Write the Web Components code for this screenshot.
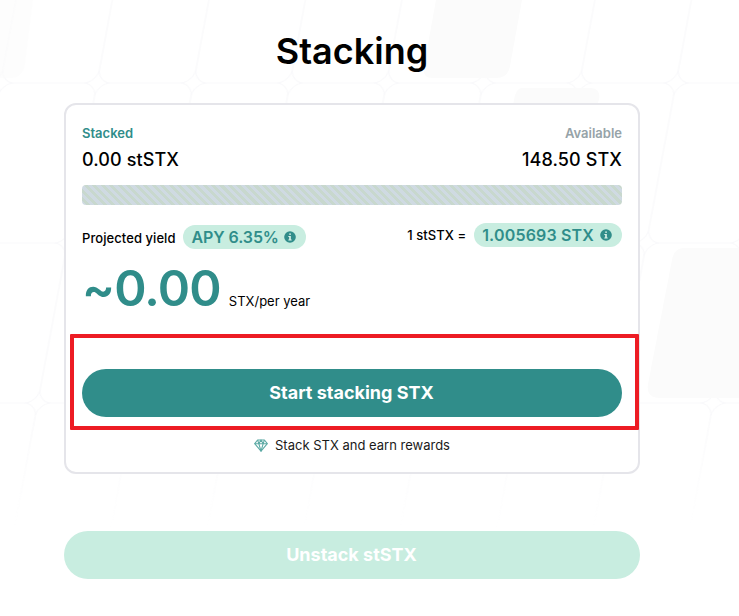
<!DOCTYPE html>
<html lang="en">
<head>
<meta charset="utf-8">
<title>Stacking</title>
<style>
html,body{margin:0;padding:0;background:#fff}
body{font-family:Inter,"Noto Sans",sans-serif;color:#000}
</style>
</head>
<body>
<template id="bg-t">
<style>
:host{position:absolute;inset:0;display:block;overflow:hidden;z-index:0;pointer-events:none}
svg{display:block;width:739px;height:616px}
</style>
<svg viewBox="0 0 739 616" aria-hidden="true">
<defs>
<pattern id="g" width="96.5" height="160" patternUnits="userSpaceOnUse" patternTransform="translate(0.5 83) skewX(-10.5)">
<rect x="0" y="0" width="96.5" height="160" rx="14" fill="none" stroke="#f9f9fb" stroke-width="1.2"/>
</pattern>
<linearGradient id="f" x1="0" y1="0" x2="0" y2="1">
<stop offset="0" stop-color="#fff"/><stop offset=".66" stop-color="#fff"/><stop offset=".86" stop-color="#fff" stop-opacity="0"/>
</linearGradient>
<mask id="m"><rect width="739" height="616" fill="url(#f)"/></mask>
</defs>
<g mask="url(#m)">
<rect width="739" height="616" fill="url(#g)"/>
<path d="M0 0H33L25 64Q23 78 10 78H0Z" fill="#fbfbfb" opacity=".6"/>
<path d="M436 0H522L510 66Q508 78 496 78H432Q422 78 424 66Z" fill="#fbfbfb"/>
<path d="M522 88H590Q601 88 599 100L594 112H512L514 100Q516 88 522 88Z" fill="#fbfbfb"/>
<path d="M684 248H739V398H660Q646 398 648 384L672 260Q674 248 684 248Z" fill="#fbfbfb"/>
</g>
</svg>
</template>

<template id="info-t">
<style>:host{display:inline-flex;flex:none;width:12px;height:12px}svg{display:block;width:100%;height:100%}</style>
<svg viewBox="0 0 13 13" aria-hidden="true"><circle cx="6.5" cy="6.5" r="6.3" fill="#308d8a"/><rect x="5.6" y="2.5" width="1.9" height="1.9" rx=".9" fill="#d9f1e9"/><path d="M4.7 5.4H7.4V9.2H8.3V10.4H4.7V9.2H5.6V6.6H4.7Z" fill="#d9f1e9"/></svg>
</template>

<template id="pill-t">
<style>
:host{display:inline-flex;align-items:center;height:24px;border-radius:12px;background:#c8ede0;color:#308d8a;font-size:16px;font-weight:600;line-height:24px;padding:0 10px 0 var(--pl,9px);gap:var(--gap,6px);white-space:nowrap;letter-spacing:var(--ls,0)}
</style>
<slot></slot><info-icon></info-icon>
</template>

<template id="stat-t">
<style>
:host{display:flex;flex-direction:column;gap:6px}
:host([end]){align-items:flex-end}
.l{font-size:13px;font-weight:600;line-height:18px;color:var(--c,#308d8a)}
.v{font-size:18px;font-weight:500;letter-spacing:.1px;line-height:24px;color:#000}
</style>
<div class="l"><slot name="label"></slot></div><div class="v"><slot></slot></div>
</template>

<template id="bar-t">
<style>
:host{display:block;height:20px;border-radius:4px;background:repeating-linear-gradient(45deg,#cfdae2 0 3px,#c8d8ce 3px 6px)}
</style>
</template>

<template id="btn-t">
<style>
:host{display:block}
button{display:block;width:100%;height:48px;border:0;border-radius:24px;padding:0 1px 0 0;font:700 18px/48px Inter,"Noto Sans",sans-serif;background:#308d8a;color:#fff;cursor:pointer}
:host([disabled]) button{background:#c8ede0;color:#fff;opacity:1;cursor:default}
</style>
<button><slot></slot></button>
</template>

<template id="mark-t">
<style>
:host{display:block;position:relative}
.box{position:absolute;left:-12px;right:-17px;top:-35px;bottom:-13px;border:4px solid #ed1c24;border-radius:1px;box-sizing:border-box;pointer-events:none}
</style>
<slot></slot><div class="box"></div>
</template>

<template id="card-t">
<style>
:host{display:block;box-sizing:border-box;height:371px;border:2px solid #e5e5ea;border-radius:12px;background:#fff;padding:19px 16px 0}
.row{display:flex;justify-content:space-between}
.bar{margin-top:13px}
.yield{display:flex;justify-content:space-between;align-items:flex-start;margin-top:18px;font-size:13px;font-weight:500;letter-spacing:.07px}
.g{display:flex;align-items:center;gap:8px;height:24px}
.g.a{margin-top:2px;gap:7px}
.g.a>span{padding-top:1px}
.big{display:flex;align-items:baseline;gap:8px;margin-top:11px;height:58px}
.num{font-size:49px;font-weight:600;letter-spacing:-.8px;line-height:58px;color:#308d8a}
.unit{font-size:13px;font-weight:400;line-height:18px}
.cta{margin-top:51px}
.note{display:flex;justify-content:center;align-items:center;gap:7px;margin-top:19px;font-size:13px;line-height:18px;color:#1a1a1a}
.note svg{width:14px;height:13px;display:block}
.apy{--ls:-.1px;--gap:5px}
.rate{--ls:.17px;--pl:8px}
</style>
<div class="row">
<stat-block><span slot="label">Stacked</span>0.00 stSTX</stat-block>
<stat-block end style="--c:#96a3a8"><span slot="label">Available</span>148.50 STX</stat-block>
</div>
<hatch-bar class="bar"></hatch-bar>
<div class="yield">
<div class="g a"><span>Projected yield</span><pill-badge class="apy">APY 6.35%</pill-badge></div>
<div class="g"><span>1 stSTX =</span><pill-badge class="rate">1.005693 STX</pill-badge></div>
</div>
<div class="big"><span class="num">~0.00</span><span class="unit">STX/per year</span></div>
<marked-area class="cta"><action-button>Start stacking STX</action-button></marked-area>
<div class="note">
<svg viewBox="0 0 14 13" aria-hidden="true" fill="none" stroke="#5ba9a4" stroke-width="1.1" stroke-linejoin="round"><path d="M3.6 1H10.4L13.3 4.7L7 12.2L.7 4.7Z"/><path d="M.7 4.7H13.3M3.6 1L4.8 4.7L7 12.2L9.2 4.7L10.4 1M4.8 4.7L7 1L9.2 4.7"/></svg>
<span>Stack STX and earn rewards</span>
</div>
</template>

<template id="page-t">
<style>
:host{display:block;position:relative;width:739px;height:616px;overflow:hidden}
.col{position:relative;z-index:1;box-sizing:border-box;width:576px;margin-left:64px;padding-top:29px}
h1{margin:0;font-size:36px;font-weight:600;line-height:44px;text-align:center;color:#000}
stacking-card{margin-top:30px}
action-button{margin-top:57px}
</style>
<pattern-bg></pattern-bg>
<div class="col">
<h1>Stacking</h1>
<stacking-card></stacking-card>
<action-button disabled>Unstack stSTX</action-button>
</div>
</template>

<stacking-page></stacking-page>

<script>
const defs={ 'pattern-bg':'bg-t','info-icon':'info-t','pill-badge':'pill-t','stat-block':'stat-t','hatch-bar':'bar-t','action-button':'btn-t','marked-area':'mark-t','stacking-card':'card-t','stacking-page':'page-t' };
for(const [name,id] of Object.entries(defs)){
  customElements.define(name,class extends HTMLElement{
    constructor(){super();this.attachShadow({mode:'open'}).appendChild(document.getElementById(id).content.cloneNode(true));}
  });
}
</script>
</body>
</html>
